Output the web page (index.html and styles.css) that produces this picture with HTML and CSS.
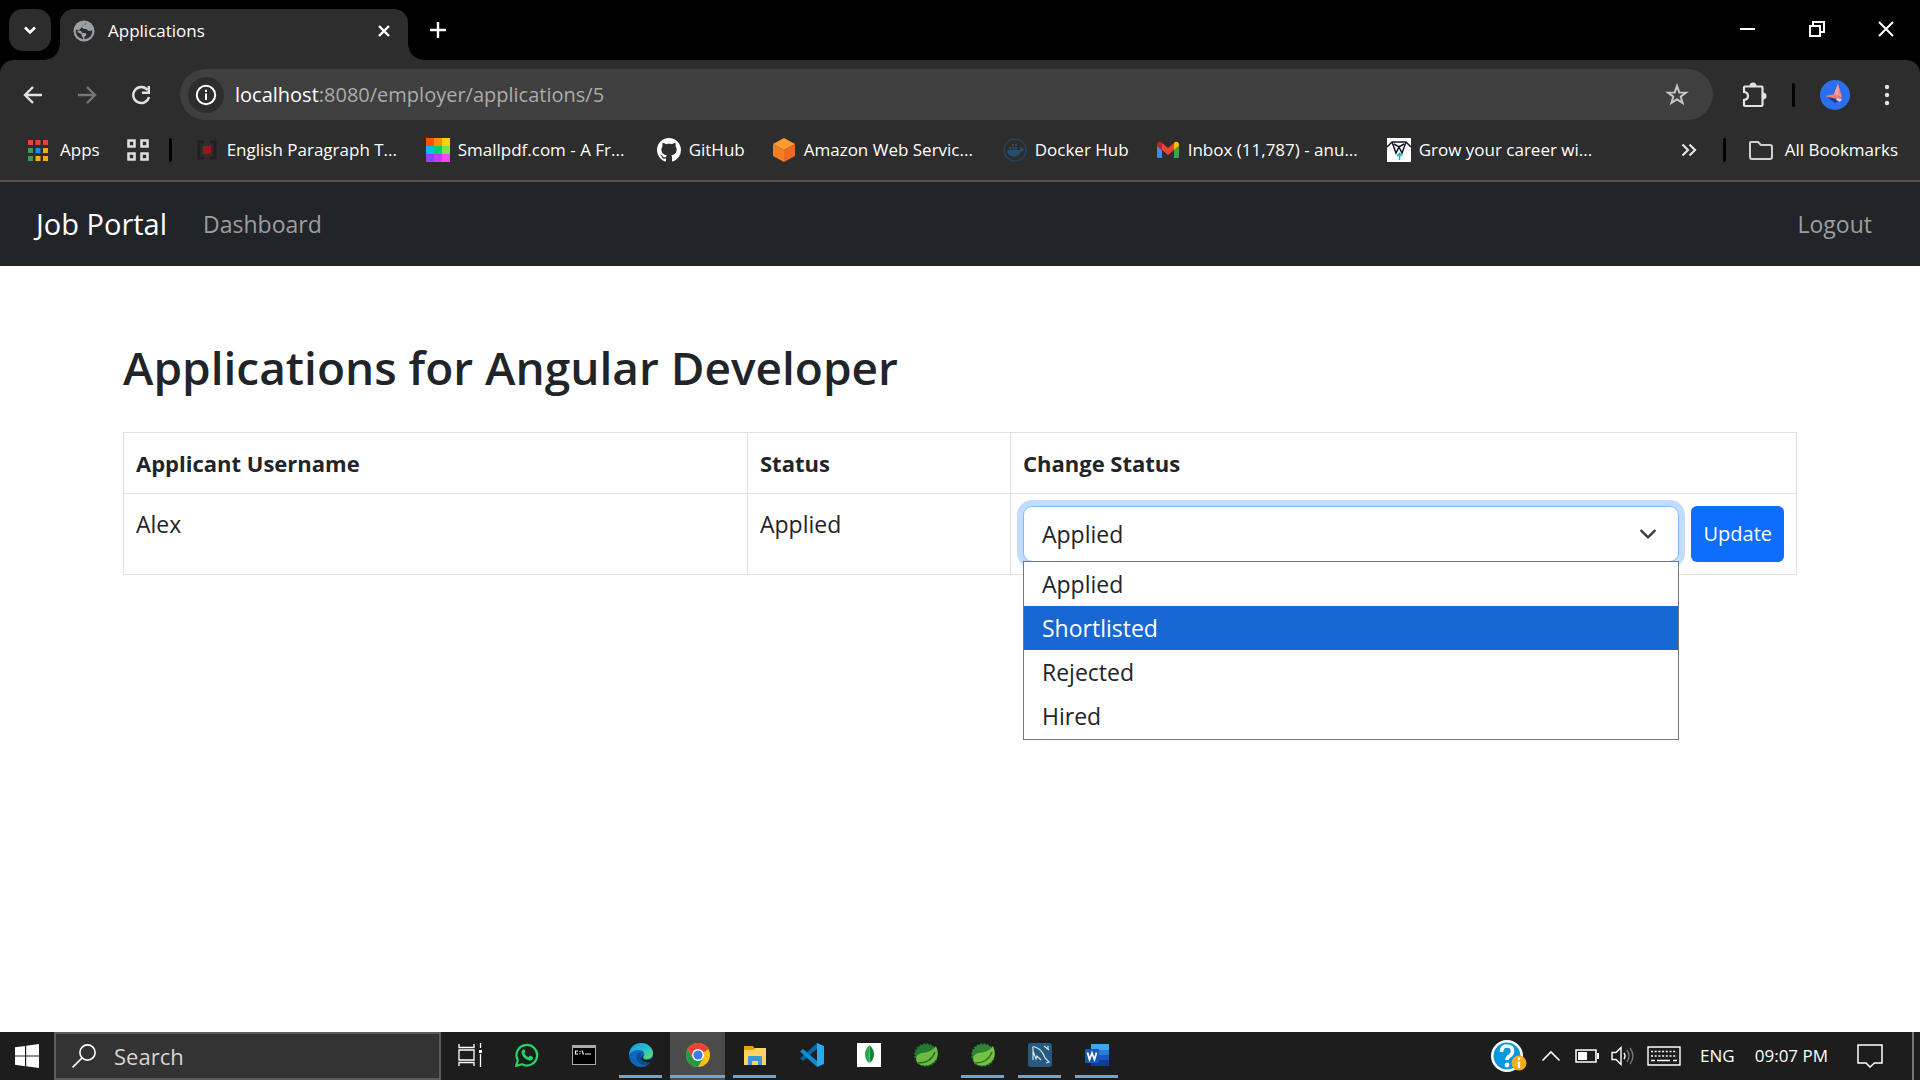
FILE: index.html
```html
<!DOCTYPE html>
<html lang="en">
<head>
<meta charset="utf-8">
<meta name="viewport" content="width=device-width, initial-scale=1">
<title>Applications</title>
<link rel="stylesheet" href="styles.css">
</head>
<body>
<header class="browser">
  <div class="tabstrip">
    <button class="tab-search" aria-label="Search tabs"><svg width="14" height="14" viewBox="0 0 14 14"><path d="M2 4.500l5 5 5-5" fill="none" stroke="#fff" stroke-width="2.600"/></svg></button>
    <div class="tab">
      <svg width="22" height="22" viewBox="0 0 22 22"><circle cx="11" cy="11" r="10.500" fill="#9aa0a6"/><path d="M13.500 2.500q0 2-2.500 2.500-2 .5-2 2.500l2 1.500h2.500l2 2 3.800-.5q0 6-5 8l-2.800.8v-2.500l2-1.800-1-2H9.500L8 11 3 9.500q-.8 5 3 8l4 1.800v-1.800l-1.500-1.500v-2L4 12" fill="#2d2d2d"/></svg>
      <span class="tab-title">Applications</span>
      <button class="icon-button" aria-label="Close tab"><svg width="14" height="14" viewBox="0 0 14 14"><path d="M2 2l10 10M12 2L2 12" stroke="#fff" stroke-width="2.400"/></svg></button>
    </div>
    <button class="icon-button new-tab" aria-label="New tab"><svg width="16" height="16" viewBox="0 0 16 16"><path d="M8 0v16M0 8h16" stroke="#fff" stroke-width="2.400"/></svg></button>
    <div class="window-controls">
      <button class="icon-button" aria-label="Minimize"><svg width="16" height="16" viewBox="0 0 16 16"><path d="M0 8h15" stroke="#fff" stroke-width="2"/></svg></button>
      <button class="icon-button" aria-label="Restore"><svg width="16" height="16" viewBox="0 0 16 16"><path d="M1 5h10v10H1zM4 4V1h11v10h-3" fill="none" stroke="#fff" stroke-width="2"/></svg></button>
      <button class="icon-button" aria-label="Close"><svg width="16" height="16" viewBox="0 0 16 16"><path d="M1 1l14 14M15 1L1 15" stroke="#fff" stroke-width="2"/></svg></button>
    </div>
  </div>
  <div class="chrome-panel">
    <div class="toolbar">
      <div class="nav-buttons">
        <button class="icon-button" aria-label="Back"><svg width="20" height="20" viewBox="0 0 20 20"><path d="M19 10H2M10 2l-8 8 8 8" fill="none" stroke="#e3e3e3" stroke-width="2.400"/></svg></button>
        <button class="icon-button" aria-label="Forward"><svg width="20" height="20" viewBox="0 0 20 20"><path d="M1 10h17M10 2l8 8-8 8" fill="none" stroke="#757575" stroke-width="2.400"/></svg></button>
        <button class="icon-button" aria-label="Reload"><svg width="20" height="20" viewBox="0 0 20 20"><path d="M16.500 5A8 8 0 1 0 18 12" fill="none" stroke="#e3e3e3" stroke-width="2.400"/><path d="M17.800 1v6.800H11" fill="none" stroke="#e3e3e3" stroke-width="2.400"/></svg></button>
      </div>
      <div class="address">
        <button class="site-info" aria-label="Site information"><svg width="22" height="22" viewBox="0 0 22 22"><circle cx="11" cy="11" r="9.200" fill="none" stroke="#fff" stroke-width="2"/><path d="M11 9.500V16M11 5.800v2.200" stroke="#fff" stroke-width="2"/></svg></button>
        <label class="host" for="url">localhost</label><input class="url" id="url" type="text" value=":8080/employer/applications/5">
        <button class="icon-button" aria-label="Bookmark this page"><svg width="24" height="24" viewBox="0 0 24 24"><path d="M12 3l2.300 6.400 6.700.2-5.300 4.100L17.600 20 12 16.300 6.400 20l1.900-6.300L3 9.600l6.700-.2z" fill="none" stroke="#c7c7c7" stroke-width="2"/></svg></button>
      </div>
      <div class="toolbar-end">
        <button class="icon-button" aria-label="Extensions"><svg width="26" height="26" viewBox="0 0 26 26"><path d="M3 4.500h17.500q1 0 1 1V23q0 1-1 1H4q-1 0-1-1v-5q4-.500 4-4t-4-4V5.500q0-1 1-1z" fill="none" stroke="#e3e3e3" stroke-width="2.200"/><path d="M8.500 4a3.500 3.500 0 0 1 7 0zM22 10.500a3.500 3.500 0 0 1 0 7z" fill="#e3e3e3"/></svg></button>
        <span class="divider"></span>
        <button class="icon-button" aria-label="Profile"><svg width="30" height="30" viewBox="0 0 30 30"><circle cx="15" cy="15" r="15" fill="#2b6fec"/><path d="M8 18l7 5 6-3-4-4z" fill="#1c3f91"/><path d="M18 4l4 13-5-1-3-2z" fill="#ff8a80"/><path d="M18 4l-4 10 4 2z" fill="#f4a49a"/><path d="M5 16l10-2 7 4-5 1z" fill="#ff7b6f"/><path d="M17 18l5 1-2 3-4-2z" fill="#e8c9cf"/></svg></button>
        <button class="icon-button" aria-label="Menu"><svg width="24" height="24" viewBox="0 0 24 24" fill="#e3e3e3"><circle cx="12" cy="4" r="2.200"/><circle cx="12" cy="12" r="2.200"/><circle cx="12" cy="20" r="2.200"/></svg></button>
      </div>
    </div>
    <nav class="bookmarks" aria-label="Bookmarks">
      <a class="bookmark" href="#"><svg width="20" height="21" viewBox="0 0 20 21"><path d="M0 0h5v5H0zM7.500 0h5v5h-5zM15 0h5v5h-5z" fill="#ea4335"/><path d="M0 8h5v5H0zM0 16h5v5H0z" fill="#34a05a"/><path d="M7.500 8h5v5h-5z" fill="#1a8cff"/><path d="M15 8h5v5h-5zM7.500 16h5v5h-5zM15 16h5v5h-5z" fill="#fbab09"/></svg><span>Apps</span></a>
      <a class="bookmark bookmark-groups" href="#" aria-label="Tab groups"><svg width="22" height="22" viewBox="0 0 22 22"><path d="M1.500 1.500h6v6h-6zM14.500 1.500h6v6h-6zM1.500 14.500h6v6h-6zM14.500 14.500h6v6h-6z" fill="none" stroke="#dedede" stroke-width="2.600"/></svg></a>
      <span class="divider"></span>
      <a class="bookmark bookmark-wide" href="#"><svg width="24" height="24" viewBox="0 0 24 24"><path d="M9 4H4v16h5M15 4h5v16h-5" fill="none" stroke="#231f20" stroke-width="3"/><path d="M8 8h8v8H8z" fill="#9c1620"/></svg><span>English Paragraph T...</span></a>
      <a class="bookmark bookmark-wide" href="#"><svg width="24" height="24" viewBox="0 0 24 24"><path d="M0 0h8v8H0z" fill="#ff5000"/><path d="M8 0h8v8H8z" fill="#ff9000"/><path d="M16 0h8v8h-8z" fill="#ffd200"/><path d="M0 8h8v8H0z" fill="#00b9ff"/><path d="M8 8h8v8H8z" fill="#00d36a"/><path d="M16 8h8v8h-8z" fill="#7fe34b"/><path d="M0 16h8v8H0z" fill="#8d46ff"/><path d="M8 16h8v8H8z" fill="#c83cf5"/><path d="M16 16h8v8h-8z" fill="#ff46f0"/></svg><span>Smallpdf.com - A Fr...</span></a>
      <a class="bookmark" href="#"><svg width="24" height="24" viewBox="0 0 16 16"><path fill="#fff" d="M8 0C3.580 0 0 3.580 0 8c0 3.540 2.290 6.530 5.470 7.590.4.070.55-.17.55-.38 0-.19-.01-.82-.01-1.490-2.010.37-2.530-.49-2.690-.94-.09-.23-.48-.94-.82-1.130-.28-.15-.68-.52-.01-.53.63-.01 1.080.58 1.230.82.72 1.210 1.870.87 2.330.66.070-.52.28-.87.51-1.070-1.780-.2-3.640-.89-3.640-3.950 0-.87.31-1.590.82-2.150-.08-.2-.36-1.020.08-2.120 0 0 .67-.21 2.200.82.64-.18 1.320-.27 2-.27s1.360.09 2 .27c1.530-1.040 2.200-.82 2.200-.82.44 1.100.16 1.920.08 2.120.51.56.82 1.270.82 2.150 0 3.070-1.870 3.750-3.650 3.950.29.25.54.73.54 1.480 0 1.070-.01 1.930-.01 2.200 0 .21.15.46.55.38A8 8 0 0 0 16 8c0-4.420-3.580-8-8-8z"/></svg><span>GitHub</span></a>
      <a class="bookmark bookmark-wide" href="#"><svg width="24" height="24" viewBox="0 0 24 24"><path d="M12 0l11 6-11 6L1 6z" fill="#ff9b2f"/><path d="M1 6l11 6v12L1 18z" fill="#f57e20"/><path d="M23 6l-11 6v12l11-6z" fill="#ee6723"/></svg><span>Amazon Web Servic...</span></a>
      <a class="bookmark" href="#"><svg width="24" height="24" viewBox="0 0 24 24"><circle cx="12" cy="12" r="11" fill="none" stroke="#24465c" stroke-width="1.500"/><path d="M4 12h13q-.5-2 1-3 1 1 1.500 2h2q-1 2.500-3.500 2.500-2 5-7.500 5Q4.500 18 4 12zM6 9h2v2H6zM9 9h2v2H9zM12 9h2v2h-2zM9 6h2v2H9zM12 6h2v2h-2z" fill="#24506e"/></svg><span>Docker Hub</span></a>
      <a class="bookmark bookmark-wide" href="#"><svg width="24" height="24" viewBox="0 0 24 24"><path d="M1 8l5 4v8H2.500Q1 20 1 18.500z" fill="#4285f4"/><path d="M18 12l5-4v10.500q0 1.500-1.500 1.500H18z" fill="#34a853"/><path d="M6 5l6 5 6-5v7l-6 5-6-5z" fill="#ea4335"/><path d="M1 6q1-3 4-2l1 1v7L1 8z" fill="#c5221f"/><path d="M23 6q-1-3-4-2l-1 1v7l5-4z" fill="#fbbc04"/></svg><span>Inbox (11,787) - anu...</span></a>
      <a class="bookmark bookmark-wide" href="#"><svg width="24" height="24" viewBox="0 0 24 24"><path d="M0 0h24v24H0z" fill="#fff"/><path d="M0 9l5-5h14l5 5M5 4l4 11 3-6 3 6 4-11M7 6l5 3 5-3" fill="none" stroke="#14172e" stroke-width="1.500"/><path d="M12.500 22v-6M10 18l2.500-2.500L15 18" fill="none" stroke="#20b7c4" stroke-width="1.700"/></svg><span>Grow your career wi...</span></a>
      <button class="icon-button overflow" aria-label="More bookmarks"><svg width="16" height="14" viewBox="0 0 16 14"><path d="M1.500 1.500L7 7l-5.500 5.500M8.500 1.500L14 7l-5.500 5.500" fill="none" stroke="#e3e3e3" stroke-width="2.200"/></svg></button>
      <span class="divider"></span>
      <a class="bookmark bookmark-all" href="#"><svg width="24" height="20" viewBox="0 0 24 20"><path d="M2 2h7l3 3h9q2 0 2 2v10q0 2-2 2H3q-2 0-2-2V3q0-1 1-1z" fill="none" stroke="#d0d0d0" stroke-width="2"/></svg><span>All Bookmarks</span></a>
    </nav>
  </div>
</header>

<nav class="navbar" aria-label="Main">
  <a class="brand" href="#">Job Portal</a>
  <a class="nav-link" href="#">Dashboard</a>
  <a class="nav-link logout" href="#">Logout</a>
</nav>

<main class="container">
  <h2 class="heading">Applications for Angular Developer</h2>
  <table class="table">
    <thead><tr><th class="col-name" scope="col">Applicant Username</th><th class="col-status" scope="col">Status</th><th scope="col">Change Status</th></tr></thead>
    <tbody><tr>
      <td>Alex</td>
      <td>Applied</td>
      <td>
        <form class="status-form">
          <div class="select-wrap">
            <select class="select" aria-label="Change status"><option>Applied</option><option>Shortlisted</option><option>Rejected</option><option>Hired</option></select>
            <ul class="options" role="listbox" aria-label="Status options">
              <li role="option">Applied</li>
              <li class="active" role="option" aria-selected="true">Shortlisted</li>
              <li role="option">Rejected</li>
              <li role="option">Hired</li>
            </ul>
          </div>
          <button class="update" type="button">Update</button>
        </form>
      </td>
    </tr></tbody>
  </table>
</main>

<footer class="taskbar">
  <button class="start" aria-label="Start"><svg width="24" height="24" viewBox="0 0 24 24" fill="#fff"><path d="M0 3.300l10-1.400v9.600H0zM11.200 1.700L24 0v11.500H11.200zM0 12.600h10v9.600L0 20.800zM11.200 12.600H24V24l-12.800-1.700z"/></svg></button>
  <div class="search">
    <svg width="24" height="24" viewBox="0 0 24 24"><circle cx="15.500" cy="8.500" r="7.600" fill="none" stroke="#fff" stroke-width="1.600"/><path d="M10 14L.6 23.400" stroke="#fff" stroke-width="1.700"/></svg>
    <input type="search" placeholder="Search" aria-label="Search">
  </div>
  <div class="apps">
    <button class="app" aria-label="Task view"><svg width="24" height="24" viewBox="0 0 24 24"><path d="M1 1v3.500h15V1M1 7h15v10H1zM1 23v-3.500h15V23M22.500 0v5M22.500 11v13" fill="none" stroke="#fff" stroke-width="1.300"/><path d="M21 7h3v3h-3z" fill="#fff"/></svg></button>
    <button class="app" aria-label="WhatsApp"><svg width="24" height="24" viewBox="0 0 24 24"><path d="M1.200 22.800l1.600-5.600A10.300 10.300 0 1 1 7 21.300z" fill="none" stroke="#25d366" stroke-width="2.200"/><path d="M8 6.500q-2 1-1.500 3.500 1.500 5.500 7.500 7.500 3 .5 4-2v-1.500l-3-1.500-1.500 1.800q-3-1.300-4.300-4l1.300-1.500L9.300 6.500z" fill="#25d366"/></svg></button>
    <button class="app" aria-label="Command Prompt"><svg width="24" height="20" viewBox="0 0 24 20"><path d="M0 0h24v20H0z" fill="#a8acb0"/><path d="M1 3h22v16H1z" fill="#000"/><path d="M6 6H3.500v3H6M8 6v1M8 8v1M10 5.500l1.500 4M13 9h6" fill="none" stroke="#eee" stroke-width="1.200"/></svg></button>
    <button class="app running" aria-label="Microsoft Edge"><svg width="24" height="24" viewBox="0 0 24 24"><defs><linearGradient id="edge-top" x1="0" y1="0" x2="1" y2="1"><stop offset="0" stop-color="#1796dc"/><stop offset=".5" stop-color="#27bdd5"/><stop offset="1" stop-color="#67e15a"/></linearGradient></defs><circle cx="12" cy="12" r="12" fill="#0b68bd"/><path d="M0 11.500C1 4 6 0 12 0c7 0 12 5 12 10 0 4-3 6-6 6-3.500 0-4.500-1-3-3 1.500-3-1-6-5-6-5 0-8 1.500-10 4.500z" fill="url(#edge-top)"/><path d="M8 12c-2 5 2 10 8 10 3 0 5-1.500 6-3-4 1.500-9 1-10-4-.5-3 0-4 1-5-2-.500-4 0-5 2z" fill="#094d98"/><path d="M14.500 12c-2 3 0 5 3.500 5 2.500 0 4.500-1 6-3l-1.500 5c-4 1.500-9.500.5-10.200-3.500-.2-2 .7-3 2.200-3.500z" fill="#1e1e1e"/></svg></button>
    <button class="app running current" aria-label="Google Chrome"><svg width="24" height="24" viewBox="0 0 24 24"><circle cx="12" cy="12" r="12" fill="#fbc116"/><path d="M12 12L1.600 6A12 12 0 0 1 22.400 6z" fill="#ea4335"/><path d="M12 6h10.400L18 9zM1.600 6l5.200 9 3-6z" fill="#ea4335"/><path d="M1.600 6A12 12 0 0 0 12 24l5.200-9L12 12 6.800 15z" fill="#279847"/><circle cx="12" cy="12" r="6" fill="#fff"/><circle cx="12" cy="12" r="4.600" fill="#3b7bea"/></svg></button>
    <button class="app running" aria-label="File Explorer"><svg width="24" height="24" viewBox="0 0 24 24"><path d="M1 3h9l2 3v4H1z" fill="#e4a00f"/><path d="M1 7h9l2-2h11v17H1z" fill="#ffd35e"/><path d="M5 22v-8q0-1 1-1h12q1 0 1 1v8h-4v-4H9v4z" fill="#3b98df"/></svg></button>
    <button class="app" aria-label="Visual Studio Code"><svg width="24" height="24" viewBox="0 0 24 24"><path d="M17 0v6L3 18 0 15.500z" fill="#0065a9"/><path d="M17 24v-6L3 6 0 8.500z" fill="#138bd3"/><path d="M17 0l7 3v18l-7 3z" fill="#29a9f1"/></svg></button>
    <button class="app" aria-label="MongoDB Compass"><svg width="24" height="24" viewBox="0 0 24 24"><path d="M0 0h24v24H0z" fill="#fff"/><path d="M12.500 2q-5 5-4.500 10t4 8z" fill="#27a84a"/><path d="M12.500 2q5 5 4.500 10t-4.500 8z" fill="#13803b"/></svg></button>
    <button class="app" aria-label="Spring Tool Suite"><svg width="24" height="24" viewBox="0 0 24 24"><circle cx="12" cy="12" r="10.800" fill="#237a32" stroke="#237a32" stroke-width="2" stroke-dasharray="2 1.400"/><path d="M22 3q4 9-1 15-7 7-17 3-5-9 4-11 10-1 14-7z" fill="#6cba40"/><path d="M4 20q13 0 17-11" fill="none" stroke="#1d6b2c" stroke-width="1.400"/></svg></button>
    <button class="app running" aria-label="Spring Tool Suite workspace"><svg width="24" height="24" viewBox="0 0 24 24"><circle cx="12" cy="12" r="10.800" fill="#2f8434" stroke="#2f8434" stroke-width="2" stroke-dasharray="2 1.400"/><path d="M22 3q4 9-1 15-7 7-17 3-5-9 4-11 10-1 14-7z" fill="#76c043"/><path d="M4 20q13 0 17-11" fill="none" stroke="#2c7a2e" stroke-width="1.400"/></svg></button>
    <button class="app running" aria-label="MySQL Workbench"><svg width="24" height="24" viewBox="0 0 24 24"><rect width="24" height="24" rx="2.500" fill="#265a80"/><path d="M5 17V6q-1-3 2-2 7 2 10 11l4 4-3 1M5 8l3 8 1-3 4 4M16 3l5 4M20 3v3" fill="none" stroke="#d9e4ec" stroke-width="1.200"/></svg></button>
    <button class="app running" aria-label="Microsoft Word"><svg width="24" height="24" viewBox="0 0 24 24"><path d="M6 1h18v6H6z" fill="#41a5ee"/><path d="M6 7h18v5H6z" fill="#2b7cd3"/><path d="M6 12h18v5H6z" fill="#185abd"/><path d="M6 17h18v6H6z" fill="#103f91"/><path d="M0 6h14v14H0z" fill="#1857b8"/><path d="M2.500 9.500l2 7 2.500-6.500 2.500 6.500 2-7" fill="none" stroke="#fff" stroke-width="1.800"/></svg></button>
  </div>
  <div class="tray">
    <svg width="36" height="32" viewBox="0 0 36 32"><circle cx="16" cy="16" r="16" fill="#fff"/><circle cx="16" cy="16" r="13.500" fill="#0c96dc"/><path d="M10.500 12q0-6 5.500-6t5.500 5q0 3-3 5-2.500 1.500-2.500 4" fill="none" stroke="#fff" stroke-width="3.600"/><circle cx="16" cy="25" r="2.400" fill="#fff"/><circle cx="28" cy="23" r="7.500" fill="#f5ab1c"/><path d="M28 21.500V28M28 17.500v2.500" stroke="#fff" stroke-width="2.400"/></svg>
    <svg width="24" height="12" viewBox="-3 0 24 12"><path d="M.5 10.500L9 2l8.500 8.500" fill="none" stroke="#fff" stroke-width="1.600"/></svg>
    <svg width="24" height="14" viewBox="0 0 24 14"><path d="M1 1h20v12H1z" fill="none" stroke="#fff" stroke-width="1.500"/><path d="M3 3h9v8H3zM22 4h2v6h-2z" fill="#fff"/></svg>
    <svg width="24" height="20" viewBox="0 0 24 20"><path d="M1 6.500h4l5-5v17l-5-5H1zM13 7q2 3 0 6" fill="none" stroke="#fff" stroke-width="1.400"/><path d="M16 4q4 6 0 12M19 2q6 8 0 16" fill="none" stroke="#777" stroke-width="1.400"/></svg>
    <svg width="34" height="20" viewBox="0 0 34 20"><path d="M1 1h32v18H1z" fill="none" stroke="#fff" stroke-width="1.400"/><path d="M4 5.500h26M4 10h26" stroke="#fff" stroke-width="1.500" stroke-dasharray="2 1.700"/><path d="M4 14.500h4M10 14.500h13M26 14.500h4" stroke="#fff" stroke-width="1.500"/></svg>
    <span class="lang">ENG</span>
    <time class="clock" datetime="21:07">09:07 PM</time>
    <svg width="26" height="24" viewBox="0 0 26 24"><path d="M1 1h24v18h-7.500L13 23l-4-4H1z" fill="none" stroke="#fff" stroke-width="1.500"/></svg>
  </div>
</footer>
</body>
</html>
```

FILE: styles.css
```css
* { box-sizing: border-box; }
body {
  margin: 0;
  min-height: 100vh;
  display: flex;
  flex-direction: column;
  background: #fff;
  color: #212529;
  font-family: "Open Sans", "Noto Sans", sans-serif;
  font-size: 23px;
  line-height: 36px;
}
a { color: inherit; text-decoration: none; }
button, input, select { font: inherit; color: inherit; }
svg { display: block; flex: none; }
button { border: 0; padding: 0; background: none; }
.icon-button { display: flex; align-items: center; justify-content: center; flex: none; }

/* Browser frame */
.browser { background: #000; color: #fff; font-size: 17px; line-height: 24px; }
.tabstrip { display: flex; align-items: flex-start; height: 60px; padding: 9px 0 0 9px; }
.tab-search {
  display: flex; align-items: center; justify-content: center;
  width: 42px; height: 42px; border-radius: 14px; background: #2d2d2d;
}
.tab {
  position: relative;
  display: flex; align-items: center; gap: 13px;
  width: 348px; height: 51px; margin-left: 9px; padding: 0 17px 8px 13px;
  border-radius: 14px 14px 0 0; background: #2d2d2d;
}
.tab::before, .tab::after {
  content: ""; position: absolute; bottom: 0; width: 15px; height: 15px;
}
.tab::before { left: -15px; background: radial-gradient(circle at 0 0, transparent 14px, #2d2d2d 15px); }
.tab::after { right: -15px; background: radial-gradient(circle at 100% 0, transparent 14px, #2d2d2d 15px); }
.tab-title { flex: 1; }
.new-tab { width: 42px; height: 42px; margin-left: 9px; }
.window-controls { display: flex; gap: 53px; margin: 12px 26px 0 auto; }
.chrome-panel { border-bottom: 2px solid #505050; border-radius: 14px 14px 0 0; background: #2d2d2d; }
.toolbar { display: flex; align-items: center; padding: 9px 21px 0 23px; }
.nav-buttons { display: flex; gap: 34px; width: 157px; }
.address {
  display: flex; align-items: center; flex: 1;
  height: 51px; padding: 0 24px 0 8px; border-radius: 26px;
  background: #3f3f3f; font-size: 20px;
}
.site-info {
  display: flex; align-items: center; justify-content: center;
  width: 36px; height: 36px; margin-right: 11px; border-radius: 50%; background: #2d2d2d;
}
.url { flex: 1; min-width: 0; padding: 0; border: 0; outline: 0; background: none; color: #ababab; }
.toolbar-end { display: flex; align-items: center; gap: 25px; padding-left: 28px; }
.divider { flex: none; width: 3px; height: 24px; border-radius: 2px; background: #000; }
.bookmarks { display: flex; align-items: center; height: 60px; padding: 0 22px 0 28px; white-space: nowrap; }
.bookmark { display: flex; align-items: center; gap: 8px; margin-right: 27px; }
.bookmark:first-child { gap: 12px; }
.bookmark-groups { margin-right: 20px; }
.bookmarks .divider { margin-right: 23px; }
.bookmark-wide span { width: 172px; }
.overflow { margin: 0 26px 0 auto; }
.bookmark-all { gap: 12px; margin-right: 0; }

/* Site navigation */
.navbar { display: flex; align-items: center; height: 84px; padding: 0 48px 0 36px; background: #212529; }
.brand { margin-right: 36px; color: #fff; font-size: 29px; }
.nav-link { color: #9b9d9e; }
.logout { margin-left: auto; }

/* Applications */
.container { flex: 1; width: 100%; max-width: 1710px; margin: 0 auto; padding: 72px 18px 0; }
.heading { margin: 0 0 36px; font-size: 46px; line-height: 58px; font-weight: 600; }
.table { width: 100%; border-collapse: collapse; table-layout: fixed; }
.table th, .table td { padding: 12px; border: 1px solid #dee2e6; text-align: left; vertical-align: top; }
.table th { font-size: 22px; }
.col-name { width: 624px; }
.col-status { width: 263px; }
.status-form { display: flex; gap: 12px; }
.select-wrap { position: relative; flex: 1; }
.select {
  display: block; width: 100%; height: 56px; padding: 0 54px 0 18px;
  appearance: none; border: 1px solid #86b7fe; border-radius: 9px;
  background: #fff url("data:image/svg+xml,%3Csvg xmlns='http://www.w3.org/2000/svg' viewBox='0 0 16 16'%3E%3Cpath fill='none' stroke='%23343a40' stroke-linecap='round' stroke-linejoin='round' stroke-width='2' d='m2 5 6 6 6-6'/%3E%3C/svg%3E") no-repeat right 21px center / 18px;
  box-shadow: 0 0 0 6px #c2dbfe;
}
.options {
  position: absolute; top: 55px; left: 0; right: 0;
  margin: 0; padding: 0 0 1px; border: 1px solid #767676;
  background: #fff; list-style: none;
}
.options li { padding: 0 18px; line-height: 44px; }
.options .active { background: #1967d2; color: #fff; }
.update { height: 56px; padding: 0 12px; border-radius: 6px; background: #0d6efd; color: #fff; font-size: 20px; }

/* Desktop taskbar */
.taskbar { display: flex; height: 48px; background: #1d1d1d; color: #fff; font-size: 17px; }
.start { display: flex; align-items: center; justify-content: center; width: 54px; }
.search {
  display: flex; align-items: center; gap: 18px;
  width: 387px; padding: 0 16px; border: 2px solid #5c5c5c; background: #333;
}
.search input { width: 100%; padding: 0; border: 0; outline: 0; background: none; font-size: 22px; }
.search input::placeholder { color: #d6d6d6; opacity: 1; }
.apps { display: flex; gap: 2px; margin-left: 1px; }
.app { display: flex; align-items: center; justify-content: center; width: 55px; padding-bottom: 2px; }
.running { background: linear-gradient(#64aadc, #64aadc) no-repeat center 43px / 43px 3px; }
.current { background-color: #4b4b4b; background-size: 55px 3px; }
.tray {
  display: flex; align-items: center; gap: 12px;
  margin: 0 6px 0 auto; padding-right: 29px; border-right: 2px solid #777;
}
.lang { margin-left: 7px; }
.clock { margin: 0 17px 0 8px; }
```
